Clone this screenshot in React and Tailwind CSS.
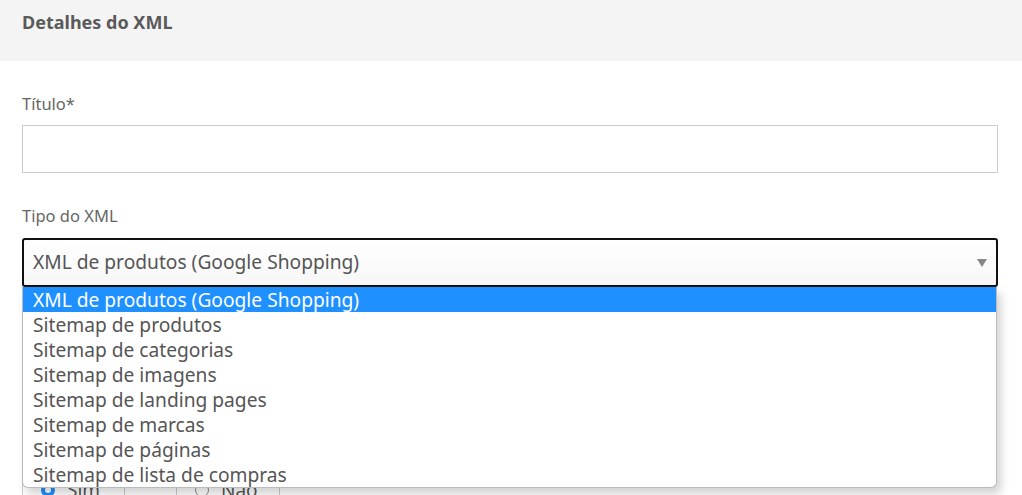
import React from "react";

const options = [
  "XML de produtos (Google Shopping)",
  "Sitemap de produtos",
  "Sitemap de categorias",
  "Sitemap de imagens",
  "Sitemap de landing pages",
  "Sitemap de marcas",
  "Sitemap de páginas",
  "Sitemap de lista de compras",
];

export default function App() {
  return (
    <div
      className="min-h-screen bg-white text-[#555]"
      style={{ fontFamily: '"Noto Sans", "Open Sans", sans-serif' }}
    >
      {/* cabeçalho */}
      <div className="h-[61px] bg-[#f4f4f4] px-[22px] pt-[9px]">
        <h2 className="text-[18px] font-bold text-[#5a5a5a]">Detalhes do XML</h2>
      </div>

      <div className="px-[22px] pr-[24px] pt-[31px]">
        <label className="block text-[16.5px] leading-[24px] text-[#666]">Título*</label>
        <input className="mt-[9px] block h-[48px] w-full border border-[#ccc] bg-white" />

        <label className="mt-[31px] block text-[16.5px] leading-[24px] text-[#666]">Tipo do XML</label>
        <div className="relative mt-[10px]">
          <div className="flex h-[49px] items-center justify-between rounded-[3px] border-2 border-[#111] bg-gradient-to-b from-white to-[#f7f7f7] pl-[9px] pr-[8px]">
            <span className="text-[19.2px] text-[#555]">XML de produtos (Google Shopping)</span>
            <svg width="10" height="8" viewBox="0 0 10 8" className="mr-[1px]">
              <path d="M0 0 L10 0 L5 8 Z" fill="#888" />
            </svg>
          </div>

          {/* lista aberta */}
          <ul className="absolute left-0 right-[1px] top-[49px] z-10 overflow-hidden rounded-b-[6px] border border-t-0 border-[#bbb] bg-white shadow-[4px_6px_10px_rgba(0,0,0,0.18)]">
            {options.map((o, i) => (
              <li
                key={i}
                className={`h-[25px] pl-[10px] text-[19.2px] leading-[25px] ${
                  i === 0 ? "bg-[#1e90ff] text-white" : "text-[#555]"
                }`}
              >
                {o}
              </li>
            ))}
          </ul>
        </div>

        {/* grupo de rádio por trás da lista */}
        <div className="mt-[183px] flex h-[40px] w-[258px] border border-[#ccc]">
          <div className="flex w-[102px] items-center gap-[12px] border-r border-[#ccc] pl-[18px]">
            <span className="h-[14px] w-[14px] rounded-full border-[4px] border-[#1e90ff]" />
            <span className="text-[19px]">Sim</span>
          </div>
          <div className="w-[52px] border-r border-[#ccc]" />
          <div className="flex items-center gap-[12px] pl-[18px]">
            <span className="h-[14px] w-[14px] rounded-full border border-[#888]" />
            <span className="text-[19px]">Não</span>
          </div>
        </div>
      </div>
    </div>
  );
}
